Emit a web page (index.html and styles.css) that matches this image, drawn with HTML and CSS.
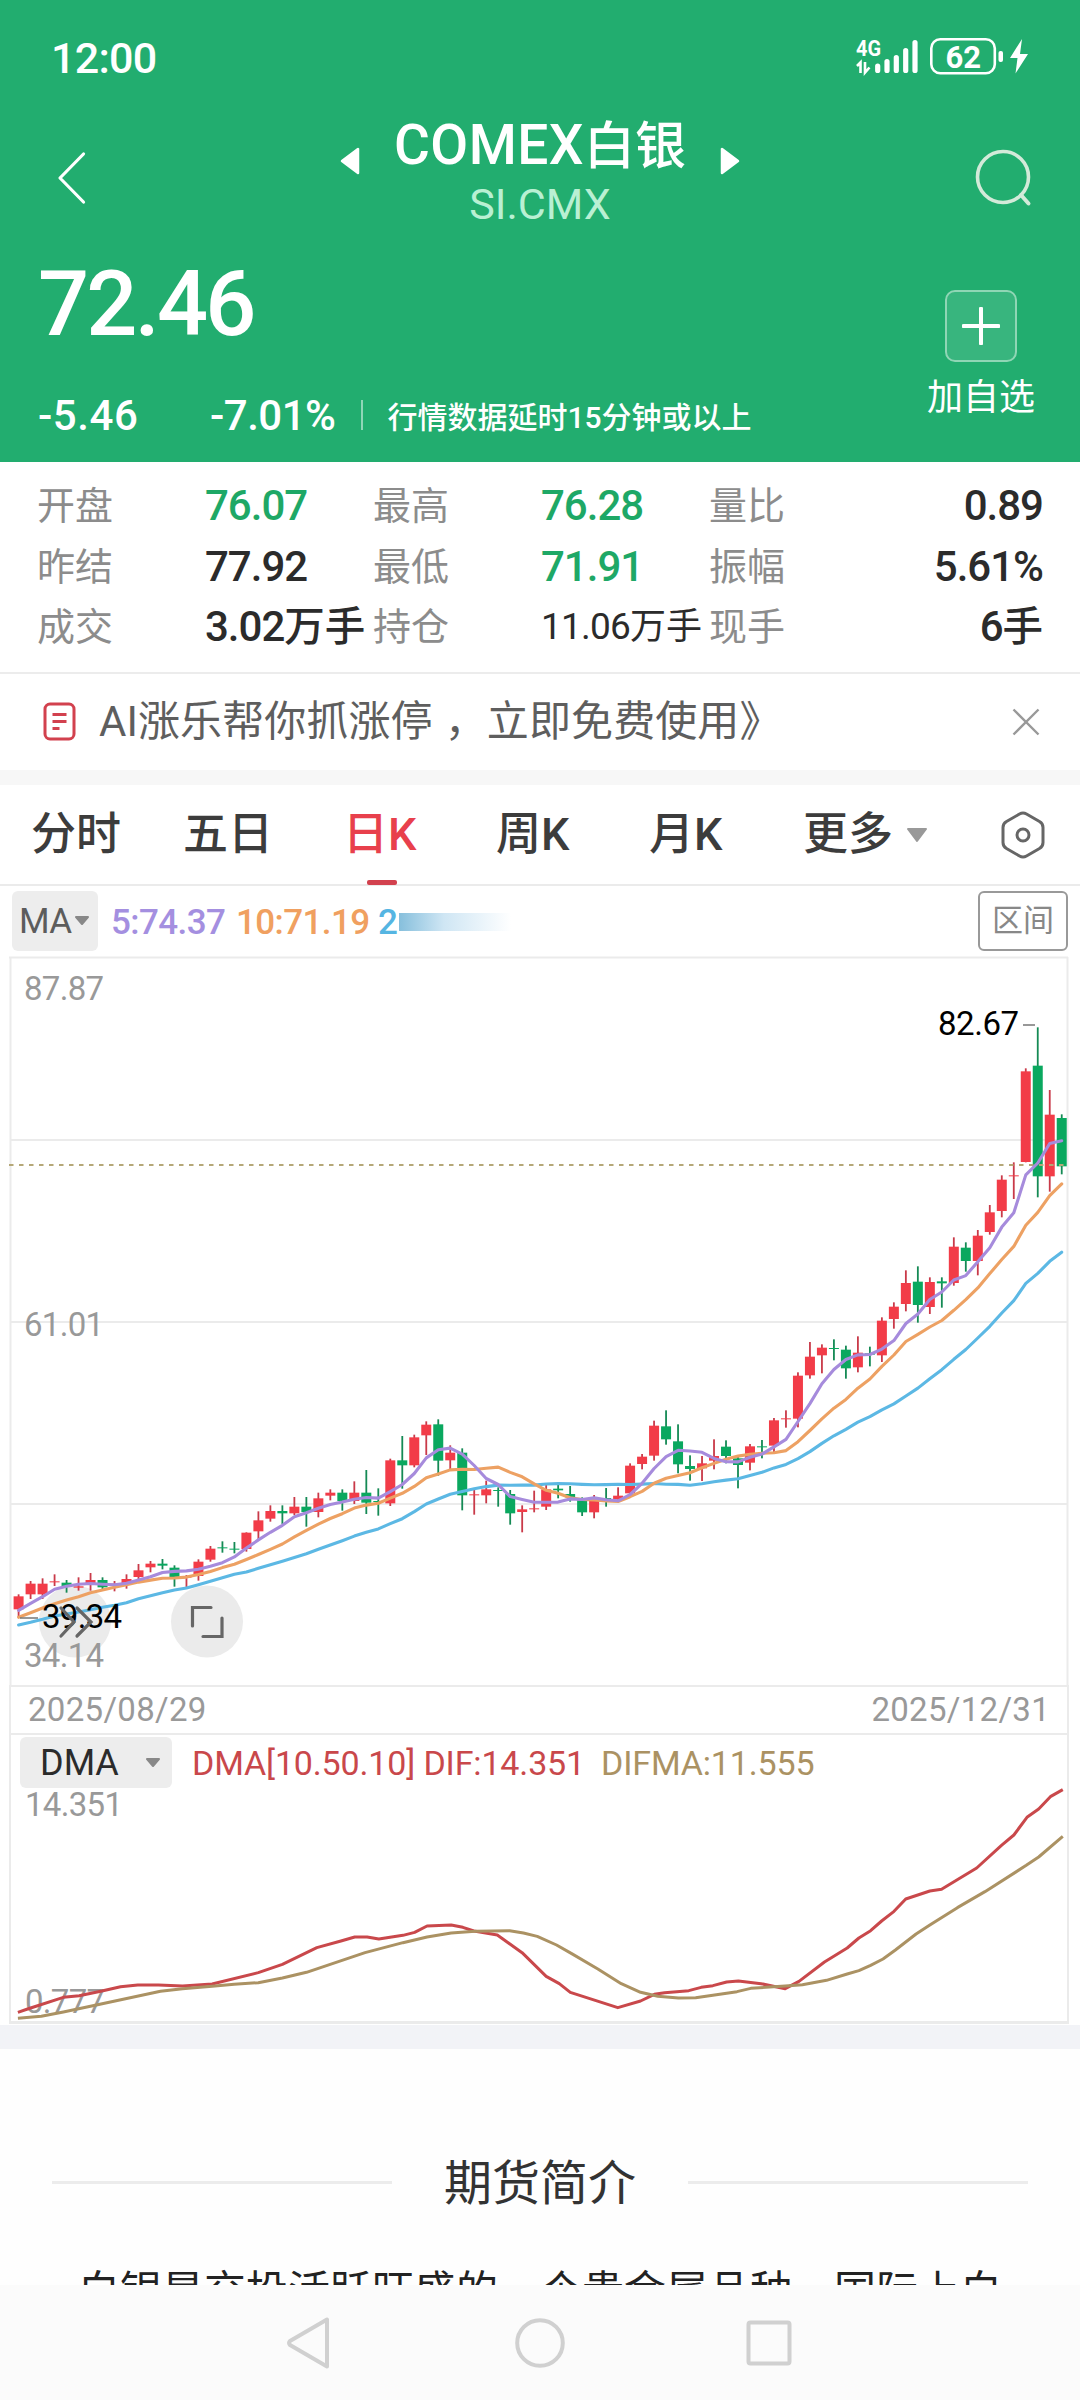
FILE: index.html
```html
<!DOCTYPE html>
<html lang="zh-CN">
<head>
<meta charset="utf-8">
<title>COMEX白银</title>
<link rel="stylesheet" href="styles.css">
</head>
<body>
<div class="screen">
  <header class="quote">
    <div class="status">
      <span class="clock">12:00</span>
      <svg class="status-icons" width="180" height="44" viewBox="852 36 180 44">
        <text x="856" y="56" class="net" textLength="25" lengthAdjust="spacingAndGlyphs">4G</text>
        <path d="M857 66l3.500-3.500V73M865 62v10.500l4.500-5" fill="none" stroke="#fff" stroke-width="2.600"/>
        <g stroke="#fff" stroke-width="5.200" stroke-linecap="round"><path d="M877.700 66v4.500M887 61.500v9M896.300 57.500v13M905.700 50.500v20M915 42.500v28"/></g>
        <rect x="931.300" y="39.300" width="63.500" height="34" rx="9" fill="none" stroke="#fff" stroke-width="2.600"/>
        <text x="963.200" y="67.600" class="batt" text-anchor="middle">62</text>
        <rect x="998.500" y="51" width="4.500" height="11" rx="2" fill="#fff"/>
        <path d="M1022 39l-12 19h7.500l-2 15.500L1028 54h-8z" fill="#fff"/>
      </svg>
    </div>
    <div class="titlebar">
      <svg class="back" width="30" height="54" viewBox="0 0 30 54"><path d="M26.500 3L3 27l23.500 24" fill="none" stroke="#fff" stroke-width="3.200" stroke-linecap="round" stroke-linejoin="round"/></svg>
      <svg class="arrow" width="20" height="28" viewBox="0 0 20 28"><path d="M18 2v24L2 14z" fill="#fff" stroke="#fff" stroke-width="2.500" stroke-linejoin="round"/></svg>
      <div class="names">
        <h1>COMEX<b>白银</b></h1>
        <div class="code">SI.CMX</div>
      </div>
      <svg class="arrow" width="20" height="28" viewBox="0 0 20 28"><path d="M2 2v24l16-12z" fill="#fff" stroke="#fff" stroke-width="2.500" stroke-linejoin="round"/></svg>
      <svg class="search" width="58" height="60" viewBox="0 0 58 60"><circle cx="28" cy="29" r="25.500" fill="none" stroke="#d3ead9" stroke-width="3.600"/><path d="M46 47l7.500 8.500" stroke="#d3ead9" stroke-width="4" stroke-linecap="round"/></svg>
    </div>
    <div class="figures">
      <div class="left">
        <div class="price">72.46</div>
        <div class="change"><span class="diff">-5.46</span><span class="pct">-7.01%</span><i></i><span class="delay">行情数据延时15分钟或以上</span></div>
      </div>
      <div class="add">
        <div class="plus"><svg width="38" height="38" viewBox="0 0 38 38"><path d="M19 1.500v35M1.500 19h35" stroke="#fff" stroke-width="4" stroke-linecap="round"/></svg></div>
        <span>加自选</span>
      </div>
    </div>
  </header>

  <section class="stats">
    <span>开盘</span><b class="g">76.07</b><span>最高</span><b class="g">76.28</b><span>量比</span><b class="r">0.89</b>
    <span>昨结</span><b>77.92</b><span>最低</span><b class="g">71.91</b><span>振幅</span><b class="r">5.61%</b>
    <span>成交</span><b>3.02<em>万手</em></b><span>持仓</span><b class="small">11.06<em>万手</em></b><span>现手</span><b class="r">6<em>手</em></b>
  </section>

  <section class="notice">
    <svg width="34" height="40" viewBox="0 0 34 40"><rect x="2" y="2" width="29" height="35" rx="5" fill="none" stroke="#d2414e" stroke-width="3"/><path d="M9.500 12.500h14M9.500 19.500h14M9.500 26.500h7" stroke="#d2414e" stroke-width="3"/></svg>
    <p>AI涨乐帮你抓涨停<i></i>，立即免费使用》</p>
    <svg class="close" width="28" height="28" viewBox="0 0 28 28"><path d="M1.500 1.500l25 25M26.500 1.500l-25 25" stroke="#999" stroke-width="2.400"/></svg>
  </section>

  <nav class="tabs">
    <span>分时</span><span>五日</span><span class="on">日K</span><span>周K</span><span>月K</span>
    <span class="more">更多<svg width="22" height="16" viewBox="0 0 22 16"><path d="M2 2h18l-9 12z" fill="#999" stroke="#999" stroke-width="2" stroke-linejoin="round"/></svg></span>
    <svg class="gear" width="46" height="48" viewBox="0 0 46 48"><path d="M19.500 3q3.500-2 7 0l13 7.500q3.500 2 3.500 6v15q0 4-3.500 6L26.500 45q-3.500 2-7 0l-13-7.500Q3 35.500 3 31.500v-15q0-4 3.500-6z" fill="none" stroke="#666" stroke-width="3"/><circle cx="23" cy="24" r="6" fill="none" stroke="#666" stroke-width="3"/></svg>
  </nav>

  <div class="ma">
    <div class="chip">MA<svg width="16" height="12" viewBox="0 0 16 12"><path d="M2 2h12l-6 7z" fill="#888" stroke="#888" stroke-width="2" stroke-linejoin="round"/></svg></div>
    <span class="ma5">5:74.37</span><span class="ma10">10:71.19</span><span class="ma20">2</span><i class="fade"></i>
    <div class="range">区间</div>
  </div>

  <svg class="chart" width="1080" height="729" viewBox="0 956 1080 729">
    <path class="grid" d="M9 957.500H1068M10.500 957V1690M1067.500 957V1690M10 1140H1067M10 1322H1067M10 1504H1067"/>
    <g fill="#ebebeb"><circle cx="75" cy="1621.500" r="36"/><circle cx="207" cy="1621.500" r="36"/></g>
    <g id="candles"></g>
    <path d="M9 1165H1068" stroke="#b5a878" stroke-width="1.900" stroke-dasharray="4.500 5.500"/>
    <g id="averages" fill="none" stroke-width="3.100" stroke-linejoin="round" stroke-linecap="round"></g>
    <path d="M20 1618h18M1023 1025h12" stroke="#777" stroke-width="1.600"/>
    <g class="axis">
      <text x="24" y="999.500" textLength="80">87.87</text>
      <text x="24" y="1335.500" textLength="80">61.01</text>
      <text x="24" y="1666.500" textLength="80">34.14</text>
      <g class="mark"><text x="42" y="1628" textLength="80">39.34</text><text x="938" y="1035" textLength="81">82.67</text></g>
    </g>
    <g fill="none" stroke="#666" stroke-width="3.200" stroke-linecap="round"><path d="M61 1608l13 14-13 14M77 1608l14 14-14 14"/><path d="M192.500 1626v-18.500H211M203 1636.500h19V1618"/></g>
  </svg>

  <div class="dates"><span>2025/08/29</span><span>2025/12/31</span></div>

  <section class="dma">
    <div class="legend">
      <div class="chip2">DMA<svg width="16" height="12" viewBox="0 0 16 12"><path d="M2 2h12l-6 7z" fill="#888" stroke="#888" stroke-width="2" stroke-linejoin="round"/></svg></div>
      <span class="dif">DMA[10.50.10] DIF:14.351</span><span class="difma">DIFMA:11.555</span>
    </div>
    <div class="plot">
      <span>14.351</span><span>0.777</span>
      <svg width="1080" height="235" viewBox="0 290 1568 705" preserveAspectRatio="none">
        <g fill="none" stroke-width="3" stroke-linejoin="round">
          <polyline stroke="#c9484b" vector-effect="non-scaling-stroke" points="26,966 40,956 92,921 115,916 148,902 175,889 200,884 230,884 265,887 308,881 375,847 410,822 460,772 495,752 515,740 533,740 550,746 585,735 602,726 620,707 655,704 672,711 688,722 722,734 758,787 793,858 812,880 828,906 897,952 930,932 950,912 965,907 1000,901 1018,891 1035,886 1055,875 1072,872 1105,880 1140,895 1160,873 1197,815 1230,773 1247,743 1264,721 1280,692 1298,663 1315,626 1350,602 1367,597 1418,533 1454,465 1472,434 1491,381 1508,356 1525,319 1543,298"/>
          <polyline stroke="#ab9263" vector-effect="non-scaling-stroke" points="26,984 60,978 92,965 145,942 233,903 265,895 308,888 340,882 375,877 410,863 445,846 530,787 585,757 620,740 655,728 690,723 740,721 760,728 780,738 808,764 830,790 868,836 902,880 930,906 955,918 985,923 1010,922 1040,913 1070,904 1090,894 1140,887 1165,883 1200,870 1230,851 1247,841 1264,825 1282,806 1300,779 1330,731 1350,704 1390,652 1430,604 1490,525 1508,500 1543,438"/>
        </g>
      </svg>
    </div>
  </section>

  <div class="band"></div>

  <section class="intro">
    <h2><i></i><span>期货简介</span><i></i></h2>
    <p>白银是交投活跃旺盛的一个贵金属品种，国际上白</p>
  </section>

  <footer class="sysnav">
    <svg width="46" height="54" viewBox="0 0 46 54"><path d="M41 3.500v47L4 29q-2-2 0-4z" fill="none" stroke="#d0d0d0" stroke-width="4" stroke-linejoin="round"/></svg>
    <svg width="50" height="50" viewBox="0 0 50 50"><circle cx="25" cy="25" r="22.800" fill="none" stroke="#d0d0d0" stroke-width="4"/></svg>
    <svg width="46" height="46" viewBox="0 0 46 46"><rect x="2.500" y="2.500" width="41" height="41" rx="2" fill="none" stroke="#d0d0d0" stroke-width="4"/></svg>
  </footer>
</div>
<script src="chart.js"></script>
</body>
</html>
```
FILE: styles.css
```css
* { box-sizing: border-box; margin: 0; padding: 0; }
body { background: #fff; font-family: Roboto, "Noto Sans CJK SC", sans-serif; }
b, em, i { font-weight: inherit; font-style: normal; }
svg { display: block; flex: none; }
.screen { width: 1080px; height: 2400px; overflow: hidden; display: flex; flex-direction: column; background: #fff; }
.screen > * { flex: none; white-space: nowrap; }

.quote { height: 462px; background: #22ad6f; color: #fff; }
.status { height: 116px; padding: 0 48px 0 51px; display: flex; justify-content: space-between; align-items: center; }
.clock { font-size: 43px; font-weight: 500; letter-spacing: -.7px; }
.net { font: 700 22px Roboto, sans-serif; fill: #fff; }
.batt { font: 700 31px Roboto, sans-serif; fill: #fff; }
.titlebar { height: 124px; padding: 0 47px 0 57px; display: flex; align-items: center; }
.names { flex: none; width: 320px; margin: -13px 20px 0 20px; text-align: center; }
h1 { font-size: 55px; line-height: 62px; font-weight: 500; letter-spacing: .5px; }
h1 b { font-size: 51px; letter-spacing: 0; }
.code { font-size: 43px; line-height: 52px; color: #b9f0d3; }
.titlebar .arrow { margin-top: -35px; }
.titlebar .back + .arrow { margin-left: 253px; }
.search { margin-left: auto; margin-top: -1px; }
.figures { height: 222px; display: flex; justify-content: space-between; padding: 0 45px 0 38px; }
.price { height: 130px; line-height: 130px; font-size: 90px; font-weight: 500; letter-spacing: -2.800px; }
.change { display: flex; align-items: center; height: 40px; margin-top: 25px; font-size: 42px; font-weight: 500; }
.diff { width: 172px; letter-spacing: .6px; }
.pct { width: 151px; letter-spacing: -.5px; }
.change i { width: 1.500px; height: 30px; background: #90d6b7; margin-right: 25px; }
.delay { font-size: 30px; }
.add { display: flex; flex-direction: column; align-items: center; padding-top: 50px; font-size: 36px; line-height: 52px; }
.plus { width: 72px; height: 72px; border: 2px solid #8fd6b5; border-radius: 10px; background: #38b57e; display: grid; place-items: center; margin-bottom: 10px; }

.stats { height: 210px; padding: 14px 37px 0; display: grid; grid-template-columns: 168px 168px 168px 168px 140px 194px; grid-template-rows: repeat(3, 60.500px); align-items: center; font-size: 42px; color: #2b2b2b; line-height: 60px; }
.stats span { font-size: 38px; color: #8c8c8c; }
.stats b { letter-spacing: -1px; font-weight: 500; }
.stats em { font-size: 40.500px; letter-spacing: 0; }
.stats .g { color: #1ea866; }
.stats .r { text-align: right; }
.stats .small { font-size: 37px; letter-spacing: -.8px; font-weight: 400; }
.stats .small em { font-size: 36px; }

.notice { height: 98px; border-top: 2px solid #ececec; display: flex; align-items: center; padding: 0 40px 0 43px; color: #5e5e5e; font-size: 42px; }
.notice p { margin-left: 22px; line-height: 60px; letter-spacing: .1px; }
.notice p i { display: inline-block; width: 12px; }
.close { margin-left: auto; }

.tabs { height: 116px; border-top: 15px solid #f7f7f7; border-bottom: 2px solid #ebebeb; display: grid; grid-template-columns: 152px 160px 153px 153px 154px 197px 1fr; padding-left: 31px; font-size: 45px; line-height: 100px; color: #3c3c3c; font-weight: 500; }
.tabs span { position: relative; }
.tabs .on { color: #e8404c; }
.tabs .on::after { content: ""; position: absolute; left: 24px; bottom: 0; width: 30px; height: 5px; border-radius: 2px; background: #d2414e; }
.more { display: flex; align-items: center; gap: 13px; }
.gear { align-self: center; }

.ma { height: 70px; padding: 5px 12px 0; display: flex; align-items: flex-start; font-size: 35px; line-height: 59px; }
.chip { width: 86px; height: 60px; padding-left: 7px; border-radius: 6px; background: #ededed; color: #5c5c5c; display: flex; align-items: center; gap: 2px; letter-spacing: -.5px; }
.ma span { padding-top: 2px; font-weight: 500; letter-spacing: -.6px; }
.ma5 { width: 125px; margin-left: 13px; color: #a48fe0; }
.ma10 { width: 142px; color: #f0a060; }
.ma20 { width: 21px; color: #55b5e2; }
.fade { width: 112px; height: 18px; margin-top: 22px; background: linear-gradient(90deg, #86bfdc, #cfe6f4 40%, #fff); }
.range { margin-left: auto; width: 90px; height: 60px; border: 2px solid #999; border-radius: 6px; text-align: center; font-size: 31px; line-height: 56px; color: #888; }

.grid { fill: none; stroke: #ebebeb; stroke-width: 2; }
.axis { font: 33px Roboto, sans-serif; fill: #999; }
.mark { fill: #000; }
.dates { height: 48px; margin: 0 11px 0 9px; border: 2px solid #ebebeb; border-width: 2px 2px 0; padding: 0 17px; display: flex; justify-content: space-between; font-size: 33px; line-height: 45px; color: #999; letter-spacing: .3px; }
.dma { height: 291px; margin: 0 11px 0 9px; border: 2px solid #ebebeb; border-bottom-width: 3px; }
.legend { height: 53px; padding: 2px 0 0 9px; display: flex; align-items: center; font-size: 34px; }
.chip2 { width: 152px; height: 51px; border-radius: 6px; background: #ededed; color: #2b2b2b; font-size: 36px; padding: 0 11px 0 20px; display: flex; align-items: center; justify-content: space-between; }
.dif { margin-left: 20px; width: 409px; color: #c9484b; letter-spacing: -.15px; }
.difma { color: #ab9263; letter-spacing: -.15px; }
.plot { height: 233px; position: relative; color: #999; font-size: 33px; line-height: 34px; letter-spacing: -.7px; display: flex; flex-direction: column; justify-content: space-between; padding: 0 0 2px 14px; }
.plot svg { position: absolute; left: -11px; top: -1px; }

.band { height: 24px; margin-top: 1px; background: #f2f3f7; }
.intro { height: 236px; overflow: hidden; background: #fefefe; }
h2 { height: 64px; margin-top: 99px; display: flex; justify-content: center; align-items: center; gap: 52px; padding: 0 52px; font-size: 48px; font-weight: 400; color: #333; }
h2 span { margin-top: -3px; }
h2 i { flex: 1; height: 3px; margin-top: 5px; background: #ececec; }
.intro p { padding-left: 78px; font-size: 42px; line-height: 60px; margin-top: 50px; color: #222; }
.sysnav { height: 116px; background: #fbfbfb; display: flex; align-items: center; padding-left: 286px; gap: 183px; }
.sysnav svg + svg + svg { margin-left: -2px; }
```
FILE: chart.js
```js
// Each run of candles: vertical origin, then rows of
// [direction, high, body top, body bottom, low] in thirds of a pixel.
const runs = [
  [1380, `R 643 649 688 710|R 603 611 643 657|R 595 611 643 657|R 583 604 606 618|G 600 608 618 638|R 592 619 623 632|R 579 600 613 632|G 592 600 622 628|R 603 611 618 634|R 583 597 612 626|R 552 571 591 597|R 543 551 562 577|G 537 551 557 568|G 556 563 595 620|R 585 590 592 624|R 538 545 588 602|R 498 506 539 545|G 484 502 505 518|G 486 506 508 520|R 457 458 507 515|R 394 421 454 480|R 376 393 416 425|G 376 393 400 432|R 351 380 400 405|G 351 380 396 440|R 338 355 396 412|R 328 338 347 361|G 328 338 363 392|R 304 338 363 372|G 270 338 368 402|G 325 363 365 407|R 236 241 370 378|G 168 241 256 326|R 164 172 256 262|R 124 134 166 225|G 118 133 242 287|R 196 218 241 270|G 205 218 346 391|R 328 343 345 404|R 302 328 346 370|G 322 330 332 380|G 330 342 400 434|R 376 388 396 457|R 332 385 387 397`],
  [1360, `R 375 388 440 450|G 368 386 391 415|G 378 402 412 425|G 412 420 457 468|R 405 420 457 475|G 384 414 416 440|R 382 407 418 425|R 310 317 400 405|R 282 290 312 328|R 182 197 287 302|G 151 199 238 254|G 193 244 313 340|G 286 318 327 362|R 288 310 325 363|R 238 288 302 328`],
  [1000, `G 1321 1340 1368 1390|G 1370 1375 1395 1465|R 1332 1339 1388 1411|G 1320 1339 1341 1375|R 1254 1261 1337 1357|R 1231 1255 1257 1283|R 1117 1127 1256 1282|R 1026 1070 1126 1136|R 1033 1043 1066 1120|G 1018 1044 1047 1081|G 1037 1049 1105 1136|R 1009 1058 1102 1117|G 1040 1060 1064 1099|R 952 962 1066 1086|R 907 920 957 986|R 811 849 912 934|G 799 845 915 968|R 832 846 921 942|G 832 844 850 923|R 712 740 849 857|G 727 743 783 815|R 690 707 783 826|R 615 637 696 704|R 526 539 633 652|R 487 526 528 597|R 205 214 486 487|G 82 197 529 592|R 270 344 529 575|G 343 354 499 523`]
];
const X0 = 18.6, STEP = 11.99;
const closes = [];
let shapes = "";
for (const [base, rows] of runs) {
  for (const row of rows.split("|")) {
    const parts = row.split(" ");
    const up = parts[0] === "R";
    const [high, top, bottom, low] = parts.slice(1).map(v => base + v / 3);
    const x = X0 + closes.length * STEP;
    const fill = up ? "#f23c48" : "#0aa85f";
    const h = Math.max(bottom - top, 1);
    shapes += `<rect x="${x - 0.9}" y="${high}" width="1.8" height="${low - high}" fill="${up ? "#c93a49" : "#158a55"}"/>`;
    shapes += `<rect x="${x - 5}" y="${top}" width="10" height="${h}" fill="${fill}"/>`;
    closes.push(up ? top : bottom);
  }
}
document.getElementById("candles").innerHTML = shapes;

// Averages start from known values until enough closes are available.
const averages = [
  [20, "#5cb8e4", [735,727,718,708,702,696,689,682,676,668,656,647,638,630,624,614,604,593,583]],
  [10, "#eda163", [712,698,684,671,660,650,638,630,622]],
  [5, "#a68bdc", [691,670,650,628]]
];
document.getElementById("averages").innerHTML = averages.map(([n, color, seed]) => {
  const pts = closes.map((_, i) => {
    const y = i < seed.length ? 1380 + seed[i] / 3
      : closes.slice(i - n + 1, i + 1).reduce((a, b) => a + b, 0) / n;
    return `${(X0 + i * STEP).toFixed(1)},${y.toFixed(1)}`;
  });
  return `<polyline stroke="${color}" points="${pts.join(" ")}"/>`;
}).join("");
```
